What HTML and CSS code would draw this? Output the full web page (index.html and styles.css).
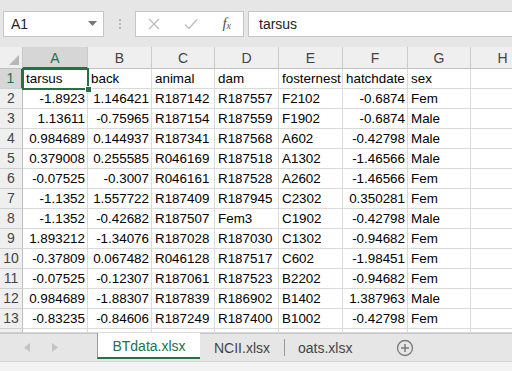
FILE: index.html
```html
<!DOCTYPE html>
<html lang="en">
  <head>
    <meta charset="UTF-8" />
    <title>BTdata.xlsx</title>
    <link rel="stylesheet" href="styles.css">
  </head>
  <body>
    <div class="formula-bar">
      <div class="name-box">
        <span>A1</span>
        <svg class="caret" width="9" height="5" viewBox="0 0 9 5"><path d="M0 0h9L4.5 5z" fill="#777"/></svg>
      </div>
      <div class="grip">
        <i></i><i></i><i></i>
      </div>
      <div class="fn-buttons">
        <svg width="12" height="12" viewBox="0 0 12 12"><path d="M1 1l10 10M11 1L1 11" stroke="#bdbdbd" stroke-width="1.4" fill="none"/></svg>
        <svg width="14" height="12" viewBox="0 0 14 12"><path d="M1 6.5l4 4L13 1.5" stroke="#bdbdbd" stroke-width="1.4" fill="none"/></svg>
        <span class="fx">f<sub>x</sub></span>
      </div>
      <div class="formula-input">tarsus</div>
    </div>

    <div class="sheet">
      <div class="row head">
        <div class="cell corner"><svg width="10" height="10" viewBox="0 0 10 10"><path d="M10 0v10H0z" fill="#b8b8b8"/></svg></div>
        <div class="cell col sel">A</div>
        <div class="cell col">B</div>
        <div class="cell col">C</div>
        <div class="cell col">D</div>
        <div class="cell col">E</div>
        <div class="cell col">F</div>
        <div class="cell col">G</div>
        <div class="cell col">H</div>
      </div>
      <div id="rows"></div>
      <div class="row tail">
        <div class="cell rh"></div>
        <div class="cell"></div><div class="cell"></div><div class="cell"></div><div class="cell"></div>
        <div class="cell"></div><div class="cell"></div><div class="cell"></div><div class="cell"></div>
      </div>
      <div class="selection"><span class="handle"></span></div>
    </div>

    <div class="tab-bar">
      <div class="tab-nav">
        <svg width="6" height="9" viewBox="0 0 6 9"><path d="M6 0v9L0 4.5z" fill="#c4c4c4"/></svg>
        <svg width="6" height="9" viewBox="0 0 6 9"><path d="M0 0v9l6-4.5z" fill="#c4c4c4"/></svg>
      </div>
      <div class="tab active">BTdata.xlsx</div>
      <div class="tab">NCII.xlsx</div>
      <div class="tab">oats.xlsx</div>
      <svg class="add" width="18" height="18" viewBox="0 0 18 18"><circle cx="9" cy="9" r="7.5" stroke="#7a7a7a" stroke-width="1.3" fill="none"/><path d="M9 5v8M5 9h8" stroke="#7a7a7a" stroke-width="1.5"/></svg>
    </div>
    <div class="status"></div>

    <script>
      const data = [
        ["tarsus", "back", "animal", "dam", "fosternest", "hatchdate", "sex"],
        [-1.8923, 1.146421, "R187142", "R187557", "F2102", -0.6874, "Fem"],
        [1.13611, -0.75965, "R187154", "R187559", "F1902", -0.6874, "Male"],
        [0.984689, 0.144937, "R187341", "R187568", "A602", -0.42798, "Male"],
        [0.379008, 0.255585, "R046169", "R187518", "A1302", -1.46566, "Male"],
        [-0.07525, -0.3007, "R046161", "R187528", "A2602", -1.46566, "Fem"],
        [-1.1352, 1.557722, "R187409", "R187945", "C2302", 0.350281, "Fem"],
        [-1.1352, -0.42682, "R187507", "Fem3", "C1902", -0.42798, "Male"],
        [1.893212, -1.34076, "R187028", "R187030", "C1302", -0.94682, "Fem"],
        [-0.37809, 0.067482, "R046128", "R187517", "C602", -1.98451, "Fem"],
        [-0.07525, -0.12307, "R187061", "R187523", "B2202", -0.94682, "Fem"],
        [0.984689, -1.88307, "R187839", "R186902", "B1402", 1.387963, "Male"],
        [-0.83235, -0.84606, "R187249", "R187400", "B1002", -0.42798, "Fem"]
      ];

      const rows = document.getElementById("rows");
      data.forEach((line, i) => {
        const row = document.createElement("div");
        row.className = "row";
        const rh = document.createElement("div");
        rh.className = i === 0 ? "cell rh sel" : "cell rh";
        rh.textContent = i + 1;
        row.appendChild(rh);
        line.concat([""]).forEach((v) => {
          const c = document.createElement("div");
          c.className = typeof v === "number" ? "cell num" : "cell";
          c.textContent = v;
          row.appendChild(c);
        });
        rows.appendChild(row);
      });
    </script>
  </body>
</html>
```

FILE: styles.css
```css
* {
  margin: 0;
  padding: 0;
  box-sizing: border-box;
}

body {
  width: 512px;
  height: 371px;
  overflow: hidden;
  font-family: "Liberation Sans", Arial, sans-serif;
  background: #ffffff;
}

/* formula bar */
.formula-bar {
  height: 47px;
  background: #e6e6e6;
  display: flex;
  align-items: center;
  padding: 0 0 0 3px;
}

.name-box {
  width: 101px;
  height: 26px;
  background: #fff;
  border: 1px solid #c6c6c6;
  display: flex;
  align-items: center;
  justify-content: space-between;
  padding: 0 6px 0 7px;
  font-size: 14px;
  color: #222;
}

.grip {
  width: 31px;
  display: flex;
  flex-direction: column;
  align-items: center;
  gap: 2px;
}

.grip i {
  width: 2px;
  height: 2px;
  background: #b4b4b4;
}

.fn-buttons {
  width: 109px;
  height: 26px;
  background: #fff;
  border: 1px solid #c6c6c6;
  display: flex;
  align-items: center;
  justify-content: space-between;
  padding: 0 12px 0 12px;
}

.fx {
  font-family: "Liberation Serif", serif;
  font-style: italic;
  font-size: 15px;
  color: #555;
}

.fx sub {
  font-size: 10px;
  vertical-align: -1px;
}

.formula-input {
  flex: 1;
  height: 26px;
  margin-left: 4px;
  background: #fff;
  border: 1px solid #c6c6c6;
  border-right: none;
  padding-left: 10px;
  line-height: 24px;
  font-size: 14px;
  color: #222;
}

/* grid */
.sheet {
  position: relative;
  height: 286px;
  overflow: hidden;
}

.row {
  display: grid;
  grid-template-columns: 23px 65px 64px 63px 64px 64px 65px 63px 64px;
  height: 20px;
}

.row.head {
  height: 22px;
}

.row.tail {
  height: 4px;
}

.cell {
  border-right: 1px solid #dadada;
  border-bottom: 1px solid #dadada;
  font-size: 13.4px;
  line-height: 19px;
  padding: 0 2px 0 3px;
  white-space: nowrap;
  overflow: hidden;
  color: #000;
}

.cell.num {
  text-align: right;
}

.head .cell {
  background: #efefef;
  border-right-color: #c9c9c9;
  border-bottom-color: #c0c0c0;
  line-height: 22px;
  font-size: 14px;
  text-align: center;
  color: #444;
  padding: 0;
}

.corner {
  display: flex;
  align-items: flex-end;
  justify-content: flex-end;
  padding: 0 3px 3px 0 !important;
}

.cell.rh {
  background: #efefef;
  border-right-color: #c0c0c0;
  border-bottom-color: #d0d0d0;
  font-size: 14px;
  text-align: center;
  color: #444;
  padding: 0;
}

.head .cell.sel {
  background: #d6d6d6;
  color: #217346;
  border-bottom: 2px solid #217346;
}

.cell.rh.sel {
  background: #d6d6d6;
  color: #217346;
  border-right: 2px solid #217346;
}

.selection {
  position: absolute;
  left: 22px;
  top: 21px;
  width: 67px;
  height: 22px;
  border: 2px solid #217346;
}

.handle {
  position: absolute;
  right: -5px;
  bottom: -5px;
  width: 7px;
  height: 7px;
  background: #217346;
  border: 1px solid #fff;
}

/* sheet tabs */
.tab-bar {
  height: 28px;
  background: #e6e6e6;
  border-top: 1px solid #c6c6c6;
  display: flex;
  align-items: stretch;
  font-size: 14px;
  color: #444;
}

.tab-nav {
  width: 97px;
  display: flex;
  align-items: center;
  gap: 22px;
  padding-left: 24px;
}

.tab {
  display: flex;
  align-items: center;
  padding: 0 14px;
  position: relative;
}

.tab + .tab::before {
  content: "";
  position: absolute;
  left: 0;
  top: 5px;
  height: 17px;
  border-left: 1px solid #9a9a9a;
}

.tab.active + .tab::before {
  display: none;
}

.tab.active {
  width: 103px;
  margin-top: -1px;
  margin-bottom: 2px;
  background: #fff;
  border-left: 1px solid #9a9a9a;
  border-bottom: 2px solid #217346;
  color: #217346;
  justify-content: center;
  padding: 1px 0 0;
}

.add {
  align-self: center;
  margin-left: 30px;
}

.status {
  height: 10px;
  background: #f3f3f3;
  border-top: 1px solid #d6d6d6;
}
```
